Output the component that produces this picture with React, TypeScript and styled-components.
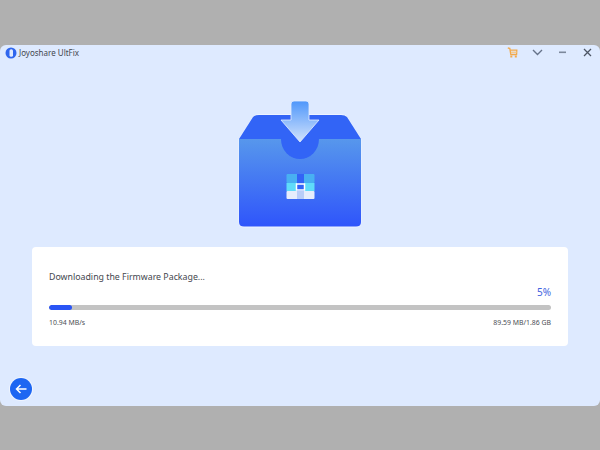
import React from "react"
import styled, { createGlobalStyle } from "styled-components"

const GlobalStyle = createGlobalStyle`
  html, body {
    margin: 0;
    padding: 0;
    background: #b0b0b0;
  }
  * {
    box-sizing: border-box;
  }
`

const BoxIcon = () => (
  <svg width="160" height="150" viewBox="0 0 160 150">
    <defs>
      <linearGradient id="body" x1="0" y1="0" x2="0" y2="1">
        <stop offset="0" stopColor="#5797ec" />
        <stop offset="1" stopColor="#2f55fb" />
      </linearGradient>
      <linearGradient id="arrow" x1="0" y1="0" x2="0" y2="1">
        <stop offset="0" stopColor="#4f97fb" />
        <stop offset="1" stopColor="#d3e3fb" />
      </linearGradient>
    </defs>
    <path
      d="M19 54 L33 32 Q35 29.500 39 29.500 L121 29.500 Q125 29.500 127 32 L141 54 L141 137 Q141 142 136 142 L24 142 Q19 142 19 137 Z"
      fill="#eef4ff"
      stroke="#eef4ff"
      strokeWidth="1"
    />
    <path d="M19 54 L33 32 Q35 30 39 30 L121 30 Q125 30 127 32 L141 54 Z" fill="#3264f6" />
    <path d="M19 54 L141 54 L141 137 Q141 141.500 136 141.500 L24 141.500 Q19 141.500 19 137 Z" fill="url(#body)" />
    <path d="M61 54 A19 20 0 0 0 99 54 Z" fill="#3264f6" />
    <path
      d="M71 19 Q71 16 74 16 L86 16 Q89 16 89 19 L89 35 L99 35 L80 57 L61 35 L71 35 Z"
      fill="url(#arrow)"
      stroke="#e4eeff"
      strokeWidth="0.8"
    />
    <rect x="66.500" y="89" width="28" height="9" rx="1" fill="#48b0f2" />
    <rect x="66.500" y="98" width="28" height="8" fill="#5fdcfa" />
    <rect x="66.500" y="106" width="28" height="8" rx="1" fill="#e6edfc" />
    <rect x="77" y="89" width="7" height="18" fill="#3264f6" />
    <rect x="77" y="106" width="7" height="8" fill="#b9cdf8" />
    <rect x="76.500" y="99" width="8" height="6" fill="#3264f6" stroke="#ffffff" strokeWidth="1.500" />
  </svg>
)

const CartIcon = () => (
  <svg width="11" height="11" viewBox="0 0 11 11" fill="none">
    <path d="M0.800 1 L2.800 1.400 L3.800 7.500 L9.600 7.500 L9.800 3.200 L3.200 3.200" stroke="#f2a94c" strokeWidth="1.300" />
    <path d="M4 5.300 L9.500 5.300" stroke="#f7c98a" strokeWidth="1.500" />
    <rect x="3.300" y="8.500" width="2" height="2" fill="#f2a94c" />
    <rect x="7.800" y="8.500" width="2" height="2" fill="#f2a94c" />
  </svg>
)

const ChevronIcon = () => (
  <svg width="11" height="7" viewBox="0 0 11 7" fill="none">
    <path d="M1 1 L5.500 5.500 L10 1" stroke="#66738a" strokeWidth="1.400" />
  </svg>
)

const MinimizeIcon = () => (
  <svg width="9" height="3" viewBox="0 0 9 3">
    <rect x="1" y="0.500" width="7" height="1.600" fill="#7c889c" />
  </svg>
)

const CloseIcon = () => (
  <svg width="9" height="9" viewBox="0 0 9 9" fill="none">
    <path d="M1 1 L8 8 M8 1 L1 8" stroke="#4d5665" strokeWidth="1.300" />
  </svg>
)

const LogoIcon = () => (
  <svg width="12" height="12" viewBox="0 0 12 12">
    <circle cx="6" cy="6" r="5.500" fill="#2f66ee" />
    <rect x="4.500" y="2.200" width="3.500" height="7.600" rx="1.600" fill="#dfeaff" />
  </svg>
)

const BackIcon = () => (
  <svg width="12" height="10" viewBox="0 0 12 10" fill="none">
    <path d="M11.500 5 L1.500 5 M5.500 1 L1.500 5 L5.500 9" stroke="#ffffff" strokeWidth="1.500" />
  </svg>
)

export default function App() {
  const percent = 5

  return (
    <Page>
      <GlobalStyle />
      <Window>
        <TitleBar>
          <Brand>
            <LogoIcon />
            <BrandName>Joyoshare UltFix</BrandName>
          </Brand>
          <WindowControls>
            <ControlSlot>
              <CartIcon />
            </ControlSlot>
            <ControlSlot>
              <ChevronIcon />
            </ControlSlot>
            <ControlSlot>
              <MinimizeIcon />
            </ControlSlot>
            <ControlSlot>
              <CloseIcon />
            </ControlSlot>
          </WindowControls>
        </TitleBar>
        <Hero>
          <BoxIcon />
        </Hero>
        <Card>
          <CardTitle>Downloading the Firmware Package...</CardTitle>
          <Percent>{percent}%</Percent>
          <Track>
            <Fill style={{ width: `${percent - 0.500}%` }} />
          </Track>
          <Stats>
            <span>10.94 MB/s</span>
            <span>89.59 MB/1.86 GB</span>
          </Stats>
        </Card>
        <Footer>
          <BackButton>
            <BackIcon />
          </BackButton>
        </Footer>
      </Window>
    </Page>
  )
}

const Page = styled.div`
  width: 600px;
  height: 450px;
  padding-top: 45px;
  overflow: hidden;
  background: #b0b0b0;
  font-family: "Noto Sans", "Open Sans", sans-serif;
`

const Window = styled.main`
  display: flex;
  flex-direction: column;
  width: 600px;
  height: 361px;
  background: #deeaff;
  border-radius: 6px;
`

const TitleBar = styled.header`
  display: flex;
  flex-shrink: 0;
  align-items: center;
  justify-content: space-between;
  height: 15px;
  padding-left: 5px;
  padding-right: 2px;
`

const Brand = styled.div`
  display: flex;
  align-items: center;
  gap: 2px;
`

const BrandName = styled.span`
  font-size: 8px;
  color: #44474e;
`

const WindowControls = styled.div`
  display: flex;
  align-items: center;
  gap: 3px;
`

const ControlSlot = styled.div`
  display: flex;
  align-items: center;
  justify-content: center;
  width: 22px;
  height: 15px;
`

const Hero = styled.div`
  display: flex;
  flex-shrink: 0;
  justify-content: center;
  height: 162px;
  margin-top: 25px;
`

const Card = styled.section`
  flex-shrink: 0;
  width: 536px;
  height: 99px;
  margin-left: 32px;
  padding: 24px 17px 0;
  background: #ffffff;
  border-radius: 4px;
`

const CardTitle = styled.h2`
  margin: 0;
  font-size: 8.800px;
  line-height: 13px;
  font-weight: 400;
  color: #44474e;
`

const Percent = styled.div`
  margin-top: 1px;
  text-align: right;
  font-size: 10px;
  line-height: 14px;
  color: #3f63e0;
`

const Track = styled.div`
  height: 5px;
  margin-top: 6px;
  background: #c3c3c3;
  border-radius: 3px;
  overflow: hidden;
`

const Fill = styled.div`
  height: 100%;
  background: #2a55f5;
  border-radius: 3px;
`

const Stats = styled.div`
  display: flex;
  justify-content: space-between;
  margin-top: 8px;
  font-size: 6.900px;
  line-height: 10px;
  color: #4c4f55;
`

const Footer = styled.footer`
  padding: 32px 0 0 10px;
`

const BackButton = styled.button`
  display: flex;
  align-items: center;
  justify-content: center;
  width: 22px;
  height: 22px;
  padding: 0;
  border: none;
  border-radius: 50%;
  background: #1d66f2;
  box-shadow: 0 0 0 1px #f0f5ff;
  cursor: pointer;
`
